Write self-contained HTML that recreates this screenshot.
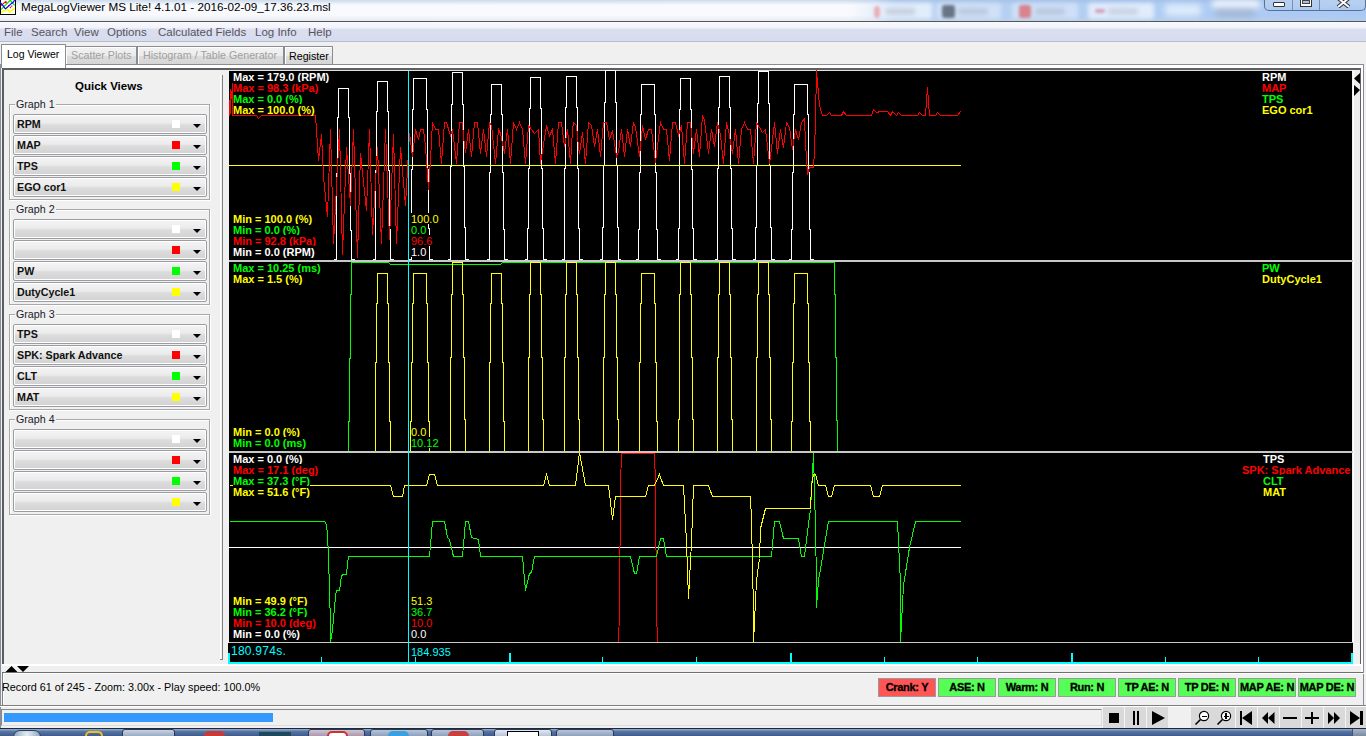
<!DOCTYPE html><html><head><meta charset="utf-8"><style>
*{margin:0;padding:0;box-sizing:border-box}
html,body{width:1366px;height:736px;overflow:hidden;background:#f0f0f0;font-family:"Liberation Sans",sans-serif;position:relative}
div{white-space:nowrap}
.pt{background:linear-gradient(#000 0,#000 11px,transparent 11px)}
.a{position:absolute}
.menu{font-size:12px;color:#3c3c46;top:24px}
.tab{position:absolute;font-size:10.7px;border:1px solid #898c95;background:linear-gradient(#f3f3f3 0%,#ebebeb 50%,#dddddd 55%,#d5d5d5 100%);box-shadow:inset 1px 1px 0 #fff;color:#a0a0a0;padding-left:5px;line-height:16px}
.combo{position:absolute;left:13px;width:194px;height:20px;border:1px solid #9a9ca2;border-radius:2px;background:linear-gradient(#f4f4f4 0%,#ebebeb 45%,#dcdcdc 55%,#d2d2d2 100%);font-weight:bold;font-size:10.7px;color:#111;padding-left:3px;line-height:18px;box-shadow:inset 0 0 0 1px #fff}
.sq{position:absolute;left:158px;top:5px;width:8px;height:8px}
.arr{position:absolute;left:179px;top:9px;width:0;height:0;border-left:4px solid transparent;border-right:4px solid transparent;border-top:4px solid #000}
.grp{position:absolute;left:9px;width:201px;border:1px solid #a8a8a8;box-shadow:1px 1px 0 #fff inset,1px 1px 0 #fff}
.glab{position:absolute;left:5px;top:-8px;background:#f0f0f0;font-size:10.7px;color:#1a1a2a;padding:0 1px;line-height:14px}
.ind{position:absolute;top:678px;height:19px;width:58px;border:1px solid #9a9a9a;font-weight:bold;font-size:11px;letter-spacing:-0.3px;-webkit-text-stroke:0.3px #000;text-align:center;line-height:17px;color:#000}
.tb{position:absolute;top:707px;height:20px;width:21px;background:#dadada}
</style></head><body>
<div class="a" style="left:0;top:0;width:1366px;height:21px;background:linear-gradient(90deg,#f7f9fc 0%,#f9fafd 62%,#eef4fb 63.5%,#bcd5f3 65.5%,#b4cff2 75%,#b0cdf3 85%,#aecbf3 90%,#a9c9f4 100%)"></div>
<div class="a" style="left:0;top:0;width:1366px;height:5px;background:linear-gradient(rgba(150,180,220,0.45),rgba(150,180,220,0))"></div>
<div class="a" style="left:0;top:15px;width:1366px;height:6px;background:linear-gradient(rgba(200,210,225,0),rgba(200,210,225,0.35))"></div>
<div class="a" style="left:870px;top:3px;width:62px;height:16px;border-radius:3px;background:rgba(235,242,252,0.8);filter:blur(2px)"></div>
<div class="a" style="left:937px;top:3px;width:64px;height:16px;border-radius:3px;background:rgba(225,235,250,0.6);filter:blur(2px)"></div>
<div class="a" style="left:1012px;top:3px;width:66px;height:16px;border-radius:3px;background:rgba(225,235,250,0.6);filter:blur(2px)"></div>
<div class="a" style="left:1088px;top:3px;width:66px;height:16px;border-radius:3px;background:rgba(240,245,255,0.75);filter:blur(2px)"></div>
<div class="a" style="left:1165px;top:4px;width:36px;height:12px;border-radius:3px;background:rgba(240,248,255,0.7);filter:blur(3px)"></div>
<div class="a" style="left:1212px;top:0px;width:48px;height:8px;border-radius:3px;background:rgba(255,255,255,0.85);filter:blur(3px)"></div>
<div class="a" style="left:1215px;top:9px;width:40px;height:8px;border-radius:3px;background:rgba(150,160,175,0.45);filter:blur(3px)"></div>
<div class="a" style="left:874px;top:6px;width:6px;height:12px;border-radius:3px;background:rgba(230,120,130,0.55);filter:blur(1.5px)"></div>
<div class="a" style="left:942px;top:5px;width:13px;height:13px;border-radius:3px;background:rgba(70,80,95,0.75);filter:blur(1.5px)"></div>
<div class="a" style="left:1019px;top:5px;width:12px;height:13px;border-radius:3px;background:rgba(220,70,70,0.6);filter:blur(1.5px)"></div>
<div class="a" style="left:1095px;top:9px;width:10px;height:4px;border-radius:3px;background:rgba(200,80,120,0.5);filter:blur(1.5px)"></div>
<div class="a" style="left:885px;top:8px;width:30px;height:7px;border-radius:3px;background:rgba(150,160,180,0.35);filter:blur(2px)"></div>
<div class="a" style="left:958px;top:8px;width:30px;height:7px;border-radius:3px;background:rgba(150,160,180,0.35);filter:blur(2px)"></div>
<div class="a" style="left:1035px;top:8px;width:30px;height:7px;border-radius:3px;background:rgba(150,160,180,0.35);filter:blur(2px)"></div>
<div class="a" style="left:1108px;top:8px;width:30px;height:7px;border-radius:3px;background:rgba(150,160,180,0.3);filter:blur(2px)"></div>
<div class="a" style="left:0;top:21px;width:1366px;height:1px;background:#555"></div>
<svg class="a" style="left:0;top:0" width="17" height="16"><rect x="0" y="0" width="16" height="15" fill="#000"/><rect x="1" y="0" width="14" height="14" fill="#fff"/><g fill="none" stroke-width="1.2" stroke-linejoin="round"><polyline points="0.9,5.6 2.4,4.4 5.9,1.4 6.4,3.4" stroke="#f00"/><polyline points="8.4,5.4 10.5,7.6 12.5,5.4" stroke="#f00" stroke-dasharray="1.2 1"/><polyline points="1.2,9.3 3.9,6.6 10.3,0.3 14.7,5.4" stroke="#0d0"/><polyline points="0,2.4 1.5,3.9 3.4,6.1 5.4,9 11.5,3.4 13.4,2 14.7,0" stroke="#00f"/><polyline points="1.5,12.5 3.9,11 8,9.5 9.8,12.2 14.7,8.3" stroke="#ff0" stroke-width="1.5"/></g></svg>
<div class="a" style="left:21px;top:0px;font-size:11.7px;line-height:14px;color:#000">MegaLogViewer MS Lite! 4.1.01 - 2016-02-09_17.36.23.msl</div>
<div class="a" style="left:1264px;top:-3px;width:102px;height:14px;border:1px solid #5d7090;border-top:none;border-radius:0 0 5px 5px;background:linear-gradient(rgba(210,225,245,0.6),rgba(170,200,240,0.6))"></div>
<div class="a" style="left:1292px;top:-3px;width:1px;height:13px;background:#7d8fa8"></div>
<div class="a" style="left:1319px;top:-3px;width:1px;height:13px;background:#7d8fa8"></div>
<div class="a" style="left:1273px;top:2px;width:12px;height:5px;border:1px solid #333;background:#fff;border-radius:1px"></div>
<div class="a" style="left:1300px;top:-2px;width:12px;height:9px;border:1px solid #333;background:#fff"></div>
<div class="a" style="left:1302px;top:0px;width:8px;height:4px;border:1px solid #444;background:#a8c0e0"></div>
<svg class="a" style="left:1336px;top:-2px" width="16" height="10"><path d="M2,0 L13,9 M13,0 L2,9" stroke="#333" stroke-width="4"/><path d="M2,0 L13,9 M13,0 L2,9" stroke="#fff" stroke-width="2"/></svg>
<div class="a" style="left:0;top:22px;width:1366px;height:19px;background:linear-gradient(#f9fafd 0%,#f1f3fa 30%,#dadff0 40%,#d7dcee 100%)"></div>
<div class="a" style="left:0;top:41px;width:1366px;height:1px;background:#b6bccc"></div>
<div class="a menu" style="left:4px;top:25px;font-size:11.5px;line-height:14px;color:#58535e">File</div>
<div class="a menu" style="left:31px;top:25px;font-size:11.5px;line-height:14px;color:#58535e">Search</div>
<div class="a menu" style="left:74px;top:25px;font-size:11.5px;line-height:14px;color:#58535e">View</div>
<div class="a menu" style="left:107px;top:25px;font-size:11.5px;line-height:14px;color:#58535e">Options</div>
<div class="a menu" style="left:158px;top:25px;font-size:11.5px;line-height:14px;color:#58535e">Calculated Fields</div>
<div class="a menu" style="left:255px;top:25px;font-size:11.5px;line-height:14px;color:#58535e">Log Info</div>
<div class="a menu" style="left:308px;top:25px;font-size:11.5px;line-height:14px;color:#58535e">Help</div>
<div class="a" style="left:0;top:42px;width:1366px;height:22px;background:#f0f0f0"></div>
<div class="a" style="left:0;top:64px;width:1364px;height:1px;background:#898c95"></div>
<div class="a" style="left:0;top:65px;width:1363px;height:3px;background:#fff"></div>
<div class="a" style="left:2px;top:68px;width:1360px;height:2px;background:#5f5f5f"></div>
<div class="a" style="left:1363px;top:64px;width:1px;height:664px;background:#898c95"></div>
<div class="a" style="left:1361px;top:65px;width:2px;height:607px;background:#fff"></div>
<div class="a" style="left:1360px;top:68px;width:1px;height:596px;background:#606060"></div>
<div class="a" style="left:0;top:64px;width:1px;height:672px;background:#8890a0"></div>
<div class="tab" style="left:65px;top:46px;width:72px;height:19px">Scatter Plots</div>
<div class="tab" style="left:137px;top:46px;width:147px;height:19px">Histogram / Table Generator</div>
<div class="tab" style="left:284px;top:46px;width:49px;height:19px;color:#000;line-height:18px;padding-left:4px">Register</div>
<div class="a" style="left:1px;top:44px;width:65px;height:24px;border:1px solid #898c95;border-bottom:none;background:#fff;font-size:10.5px;padding-left:5px;line-height:18px;color:#000">Log Viewer</div>
<div class="a" style="left:2px;top:68px;width:2px;height:596px;background:#5d5d5d"></div>
<div class="a" style="left:220px;top:75px;width:1px;height:585px;background:#fff"></div>
<div class="a" style="left:222px;top:75px;width:1px;height:585px;background:#808080"></div>
<div class="a" style="left:220px;top:659px;width:3px;height:1px;background:#808080"></div>
<div class="a" style="left:75px;top:79px;font-size:11.5px;font-weight:bold;line-height:14px">Quick Views</div>
<div class="grp" style="top:104px;height:96px"><div class="glab">Graph 1</div></div>
<div class="combo" style="top:114px">RPM<div class="sq" style="background:#fff"></div><div class="arr"></div></div>
<div class="combo" style="top:135px">MAP<div class="sq" style="background:#f00"></div><div class="arr"></div></div>
<div class="combo" style="top:156px">TPS<div class="sq" style="background:#0f0"></div><div class="arr"></div></div>
<div class="combo" style="top:177px">EGO cor1<div class="sq" style="background:#ff0"></div><div class="arr"></div></div>
<div class="grp" style="top:209px;height:96px"><div class="glab">Graph 2</div></div>
<div class="combo" style="top:219px"><div class="sq" style="background:#fff"></div><div class="arr"></div></div>
<div class="combo" style="top:240px"><div class="sq" style="background:#f00"></div><div class="arr"></div></div>
<div class="combo" style="top:261px">PW<div class="sq" style="background:#0f0"></div><div class="arr"></div></div>
<div class="combo" style="top:282px">DutyCycle1<div class="sq" style="background:#ff0"></div><div class="arr"></div></div>
<div class="grp" style="top:314px;height:96px"><div class="glab">Graph 3</div></div>
<div class="combo" style="top:324px">TPS<div class="sq" style="background:#fff"></div><div class="arr"></div></div>
<div class="combo" style="top:345px">SPK: Spark Advance<div class="sq" style="background:#f00"></div><div class="arr"></div></div>
<div class="combo" style="top:366px">CLT<div class="sq" style="background:#0f0"></div><div class="arr"></div></div>
<div class="combo" style="top:387px">MAT<div class="sq" style="background:#ff0"></div><div class="arr"></div></div>
<div class="grp" style="top:419px;height:96px"><div class="glab">Graph 4</div></div>
<div class="combo" style="top:429px"><div class="sq" style="background:#fff"></div><div class="arr"></div></div>
<div class="combo" style="top:450px"><div class="sq" style="background:#f00"></div><div class="arr"></div></div>
<div class="combo" style="top:471px"><div class="sq" style="background:#0f0"></div><div class="arr"></div></div>
<div class="combo" style="top:492px"><div class="sq" style="background:#ff0"></div><div class="arr"></div></div>
<div class="a" style="left:2px;top:664px;width:1359px;height:2px;background:#fff"></div>
<svg class="a" style="left:0;top:666px" width="32" height="7"><path d="M5.5,6 L11.5,0 L17.5,6 Z M17,0 L29,0 L23,6 Z" fill="#000"/></svg>
<div class="a" style="left:2px;top:672px;width:1361px;height:1px;background:#707070"></div>
<div class="a" style="left:2px;top:673px;width:1px;height:32px;background:#808080"></div>
<div class="a" style="left:3px;top:673px;width:1363px;height:1px;background:#fff"></div>
<div class="a" style="left:3px;top:673px;width:1px;height:31px;background:#fff"></div>
<div class="a" style="left:0;top:705px;width:1366px;height:1px;background:#808080"></div>
<div class="a" style="left:0;top:706px;width:1366px;height:1px;background:#fff"></div>
<div class="a" style="left:2px;top:680px;font-size:10.8px;line-height:14px;color:#000">Record 61 of 245 - Zoom: 3.00x - Play speed: 100.0%</div>
<div class="ind" style="left:878px;background:#ff5555">Crank: Y</div>
<div class="ind" style="left:938px;background:#55ff55">ASE: N</div>
<div class="ind" style="left:998px;background:#55ff55">Warm: N</div>
<div class="ind" style="left:1058px;background:#55ff55">Run: N</div>
<div class="ind" style="left:1118px;background:#55ff55">TP AE: N</div>
<div class="ind" style="left:1178px;background:#55ff55">TP DE: N</div>
<div class="ind" style="left:1238px;background:#55ff55">MAP AE: N</div>
<div class="ind" style="left:1298px;background:#55ff55">MAP DE: N</div>
<div class="a" style="left:1px;top:709px;width:1101px;height:17px;border:1px solid #888;border-right-color:#ddd;border-bottom-color:#ddd;background:#f0f0f0"></div>
<div class="a" style="left:4px;top:713px;width:269px;height:9px;background:#3399ff"></div>
<div class="a" style="left:1103px;top:707px;width:65px;height:21px;background:#d9d9d9"></div>
<div class="a" style="left:1191px;top:707px;width:175px;height:21px;background:#d9d9d9"></div>
<svg class="a" style="left:1100px;top:704px" width="266" height="24" shape-rendering="crispEdges"><rect x="24" y="3" width="1" height="21" fill="#f4f4f4"/><rect x="46" y="3" width="1" height="21" fill="#f4f4f4"/><rect x="134.5" y="3" width="1" height="21" fill="#f4f4f4"/><rect x="156.5" y="3" width="1" height="21" fill="#f4f4f4"/><rect x="178.5" y="3" width="1" height="21" fill="#f4f4f4"/><rect x="200.5" y="3" width="1" height="21" fill="#f4f4f4"/><rect x="222.5" y="3" width="1" height="21" fill="#f4f4f4"/><rect x="244.5" y="3" width="1" height="21" fill="#f4f4f4"/><rect x="9" y="9" width="10" height="10" fill="#000"/><rect x="33" y="7" width="2" height="14" fill="#000"/><rect x="37" y="7" width="2" height="14" fill="#000"/><path d="M52,7 L65,14 L52,21 Z" fill="#000" shape-rendering="auto"/><circle cx="104" cy="12" r="4.6" fill="#fff" stroke="#000" stroke-width="1.2" shape-rendering="auto"/><path d="M100.5,15.5 L95.5,20.5" stroke="#000" stroke-width="1.6" shape-rendering="auto"/><rect x="101.5" y="11.5" width="5" height="1.4" fill="#000"/><circle cx="126" cy="12" r="4.6" fill="#fff" stroke="#000" stroke-width="1.2" shape-rendering="auto"/><path d="M122.5,15.5 L117.5,20.5" stroke="#000" stroke-width="1.6" shape-rendering="auto"/><rect x="123.5" y="11.5" width="5" height="1.4" fill="#000"/><rect x="125.3" y="9" width="1.4" height="6" fill="#000"/><rect x="140" y="7" width="2" height="14" fill="#000"/><path d="M142,14 L152,7 L152,21 Z" fill="#000" shape-rendering="auto"/><path d="M162,14 L168,8 L168,20 Z M168,14 L174.5,8 L174.5,20 Z" fill="#000" shape-rendering="auto"/><rect x="183" y="13" width="14" height="2" fill="#000"/><rect x="205" y="13" width="14" height="2" fill="#000"/><rect x="211" y="8" width="2" height="12" fill="#000"/><path d="M228,8 L234,14 L228,20 Z M234,8 L240,14 L234,20 Z" fill="#000" shape-rendering="auto"/><path d="M250,7 L260,14 L250,21 Z" fill="#000" shape-rendering="auto"/><rect x="260" y="7" width="2.5" height="14" fill="#000"/></svg>
<svg class="a" style="left:0;top:0" width="1366" height="736" shape-rendering="crispEdges">
<rect x="229" y="70" width="1123" height="1" fill="#e0e0e0"/><rect x="229" y="71" width="1123" height="593" fill="#000"/><rect x="1352" y="643" width="1" height="21" fill="#000"/><rect x="228" y="643" width="1" height="21" fill="#000"/>
<rect x="228" y="662" width="1125" height="2" fill="#00ffff"/>
<polyline points="326.5,260.5 333.5,260.5 334.5,259.5 336.5,259.5 336.5,230.5 336.5,230.5 336.5,173.5 337.5,173.5 337.5,117.5 338.5,117.5 338.5,88.5 339.5,88.5 348.5,88.5 348.5,117.5 349.5,117.5 349.5,173.5 350.5,173.5 350.5,230.5 351.5,230.5 351.5,259.5 352.5,259.5 354.5,259.5 355.5,260.5 372.5,260.5 373.5,259.5 375.5,259.5 375.5,229.5 375.5,229.5 375.5,170.5 376.5,170.5 376.5,111.5 377.5,111.5 377.5,81.5 378.5,81.5 387.5,81.5 387.5,111.5 388.5,111.5 388.5,170.5 389.5,170.5 389.5,229.5 390.5,229.5 390.5,259.5 391.5,259.5 393.5,259.5 394.5,260.5 408.5,260.5 409.5,259.5 411.5,259.5 411.5,228.5 411.5,228.5 411.5,169.5 412.5,169.5 412.5,109.5 413.5,109.5 413.5,78.5 414.5,78.5 426.5,78.5 426.5,109.5 427.5,109.5 427.5,169.5 428.5,169.5 428.5,228.5 429.5,228.5 429.5,259.5 430.5,259.5 432.5,259.5 433.5,260.5 447.5,260.5 448.5,259.5 450.5,259.5 450.5,227.5 450.5,227.5 450.5,166.5 451.5,166.5 451.5,104.5 452.5,104.5 452.5,72.5 453.5,72.5 462.5,72.5 462.5,104.5 463.5,104.5 463.5,166.5 464.5,166.5 464.5,227.5 465.5,227.5 465.5,259.5 466.5,259.5 468.5,259.5 469.5,260.5 486.5,260.5 487.5,259.5 489.5,259.5 489.5,229.5 489.5,229.5 489.5,172.5 490.5,172.5 490.5,114.5 491.5,114.5 491.5,84.5 492.5,84.5 501.5,84.5 501.5,114.5 502.5,114.5 502.5,172.5 503.5,172.5 503.5,229.5 504.5,229.5 504.5,259.5 505.5,259.5 507.5,259.5 508.5,260.5 524.5,260.5 525.5,259.5 527.5,259.5 527.5,228.5 528.5,228.5 528.5,168.5 529.5,168.5 529.5,108.5 530.5,108.5 530.5,77.5 531.5,77.5 540.5,77.5 540.5,108.5 541.5,108.5 541.5,168.5 542.5,168.5 542.5,228.5 543.5,228.5 543.5,259.5 544.5,259.5 546.5,259.5 547.5,260.5 561.5,260.5 562.5,259.5 564.5,259.5 564.5,228.5 564.5,228.5 564.5,168.5 565.5,168.5 565.5,107.5 566.5,107.5 566.5,76.5 567.5,76.5 576.5,76.5 576.5,107.5 577.5,107.5 577.5,168.5 578.5,168.5 578.5,228.5 579.5,228.5 579.5,259.5 580.5,259.5 582.5,259.5 583.5,260.5 599.5,260.5 600.5,259.5 602.5,259.5 602.5,227.5 603.5,227.5 603.5,165.5 604.5,165.5 604.5,102.5 605.5,102.5 605.5,70.5 606.5,70.5 615.5,70.5 615.5,102.5 616.5,102.5 616.5,165.5 617.5,165.5 617.5,227.5 618.5,227.5 618.5,259.5 618.5,259.5 620.5,259.5 621.5,260.5 635.5,260.5 636.5,259.5 638.5,259.5 638.5,229.5 639.5,229.5 639.5,172.5 640.5,172.5 640.5,114.5 641.5,114.5 641.5,84.5 642.5,84.5 654.5,84.5 654.5,114.5 655.5,114.5 655.5,172.5 656.5,172.5 656.5,229.5 657.5,229.5 657.5,259.5 658.5,259.5 660.5,259.5 661.5,260.5 675.5,260.5 676.5,259.5 678.5,259.5 678.5,228.5 679.5,228.5 679.5,169.5 679.5,169.5 679.5,109.5 680.5,109.5 680.5,78.5 681.5,78.5 690.5,78.5 690.5,109.5 691.5,109.5 691.5,169.5 692.5,169.5 692.5,228.5 693.5,228.5 693.5,259.5 694.5,259.5 696.5,259.5 697.5,260.5 714.5,260.5 715.5,259.5 717.5,259.5 717.5,228.5 717.5,228.5 717.5,168.5 718.5,168.5 718.5,107.5 719.5,107.5 719.5,76.5 720.5,76.5 729.5,76.5 729.5,107.5 730.5,107.5 730.5,168.5 731.5,168.5 731.5,228.5 732.5,228.5 732.5,259.5 733.5,259.5 735.5,259.5 736.5,260.5 752.5,260.5 753.5,259.5 755.5,259.5 755.5,227.5 756.5,227.5 756.5,165.5 757.5,165.5 757.5,103.5 758.5,103.5 758.5,71.5 759.5,71.5 768.5,71.5 768.5,103.5 769.5,103.5 769.5,165.5 770.5,165.5 770.5,227.5 771.5,227.5 771.5,259.5 772.5,259.5 774.5,259.5 775.5,260.5 788.5,260.5 789.5,259.5 791.5,259.5 791.5,229.5 792.5,229.5 792.5,172.5 793.5,172.5 793.5,114.5 794.5,114.5 794.5,84.5 795.5,84.5 807.5,84.5 807.5,114.5 808.5,114.5 808.5,172.5 809.5,172.5 809.5,229.5 810.5,229.5 810.5,259.5 811.5,259.5 813.5,259.5 814.5,260.5 812.5,260.5" fill="none" stroke="#fff" stroke-width="1"/>
<rect x="229" y="165" width="732" height="1" fill="#ffff00"/>
<polyline points="229.5,115.5 229.5,100.5 230.5,113.5 230.5,89.5 231.5,98.5 232.5,83.5 232.5,115.5 256.5,115.5 258.5,118.5 261.5,115.5 315.5,115.5 318.5,160.5 321.5,134.5 323.5,176.5 327.5,216.5 330.5,129.5 333.5,243.5 339.5,129.5 342.5,254.5 346.5,147.5 350.5,205.5 353.5,129.5 357.5,257.5 360.5,153.5 366.5,210.5 369.5,129.5 372.5,234.5 377.5,147.5 381.5,243.5 385.5,129.5 389.5,239.5 393.5,134.5 396.5,243.5 400.5,147.5 405.5,205.5 409.5,133.5 412.5,156.5 415.5,129.5 418.5,139.5 420.5,129.5 423.5,129.5 425.5,146.5 428.5,189.5 430.5,159.5 432.5,122.5 435.5,129.5 438.5,129.5 441.5,163.5 444.5,122.5 446.5,122.5 450.5,135.5 452.5,129.5 456.5,163.5 459.5,122.5 462.5,122.5 463.5,137.5 465.5,152.5 468.5,129.5 471.5,156.5 474.5,122.5 477.5,122.5 480.5,153.5 483.5,129.5 486.5,156.5 489.5,122.5 491.5,125.5 495.5,163.5 498.5,129.5 500.5,133.5 504.5,153.5 507.5,129.5 510.5,163.5 513.5,122.5 516.5,129.5 519.5,122.5 522.5,129.5 525.5,163.5 528.5,125.5 534.5,133.5 538.5,129.5 540.5,163.5 546.5,125.5 549.5,135.5 552.5,129.5 555.5,163.5 558.5,122.5 561.5,122.5 564.5,146.5 567.5,129.5 570.5,163.5 572.5,129.5 573.5,122.5 576.5,125.5 578.5,147.5 579.5,153.5 582.5,132.5 585.5,163.5 588.5,122.5 591.5,125.5 594.5,146.5 597.5,129.5 600.5,156.5 603.5,122.5 606.5,122.5 609.5,139.5 612.5,130.5 616.5,156.5 618.5,151.5 621.5,129.5 624.5,156.5 627.5,129.5 630.5,146.5 633.5,122.5 635.5,127.5 639.5,156.5 642.5,125.5 645.5,139.5 648.5,129.5 651.5,129.5 655.5,162.5 660.5,122.5 663.5,129.5 666.5,129.5 669.5,160.5 672.5,122.5 675.5,122.5 678.5,135.5 681.5,125.5 684.5,163.5 687.5,122.5 690.5,122.5 693.5,153.5 696.5,129.5 699.5,156.5 702.5,115.5 704.5,120.5 708.5,153.5 711.5,129.5 714.5,146.5 717.5,122.5 720.5,135.5 723.5,163.5 726.5,122.5 729.5,135.5 732.5,153.5 735.5,129.5 738.5,163.5 741.5,129.5 744.5,122.5 747.5,129.5 750.5,129.5 753.5,163.5 756.5,122.5 759.5,127.5 762.5,132.5 765.5,129.5 769.5,163.5 771.5,148.5 774.5,122.5 777.5,153.5 780.5,129.5 783.5,147.5 786.5,122.5 789.5,127.5 792.5,149.5 795.5,129.5 798.5,139.5 801.5,122.5 804.5,118.5 805.5,142.5 807.5,174.5 809.5,167.5 813.5,167.5 814.5,151.5 815.5,119.5 816.5,70.5 819.5,105.5 822.5,115.5 826.5,115.5 829.5,112.5 831.5,115.5 841.5,115.5 843.5,111.5 846.5,115.5 871.5,115.5 873.5,109.5 876.5,112.5 880.5,111.5 887.5,111.5 890.5,115.5 892.5,111.5 896.5,115.5 898.5,112.5 901.5,115.5 917.5,115.5 919.5,112.5 922.5,115.5 925.5,115.5 927.5,87.5 929.5,115.5 935.5,115.5 937.5,112.5 940.5,115.5 957.5,115.5 960.5,111.5" fill="none" stroke="#ff0000" stroke-width="1"/>
<polyline points="229.5,451.5 348.5,451.5 348.5,421.5 349.5,421.5 349.5,358.5 350.5,358.5 350.5,294.5 351.5,294.5 351.5,262.5 388.5,262.5 390.5,264.5 500.5,264.5 502.5,262.5 834.5,262.5 834.5,294.5 835.5,294.5 835.5,357.5 836.5,357.5 836.5,420.5 837.5,420.5 837.5,451.5 960.5,451.5" fill="none" stroke="#00ff00" stroke-width="1"/>
<polyline points="229.5,451.5 375.5,451.5 375.5,421.5 375.5,421.5 375.5,362.5 376.5,362.5 376.5,303.5 377.5,303.5 377.5,273.5 378.5,273.5 387.5,273.5 387.5,303.5 388.5,303.5 388.5,362.5 389.5,362.5 389.5,421.5 390.5,421.5 390.5,451.5 390.5,451.5 410.5,451.5 410.5,421.5 411.5,421.5 411.5,362.5 412.5,362.5 412.5,303.5 413.5,303.5 413.5,273.5 414.5,273.5 426.5,273.5 426.5,303.5 427.5,303.5 427.5,362.5 428.5,362.5 428.5,421.5 429.5,421.5 429.5,451.5 429.5,451.5 450.5,451.5 450.5,419.5 450.5,419.5 450.5,357.5 451.5,357.5 451.5,294.5 452.5,294.5 452.5,262.5 453.5,262.5 462.5,262.5 462.5,294.5 463.5,294.5 463.5,357.5 464.5,357.5 464.5,419.5 465.5,419.5 465.5,451.5 465.5,451.5 489.5,451.5 489.5,421.5 489.5,421.5 489.5,362.5 490.5,362.5 490.5,303.5 491.5,303.5 491.5,273.5 492.5,273.5 501.5,273.5 501.5,303.5 502.5,303.5 502.5,362.5 503.5,362.5 503.5,421.5 504.5,421.5 504.5,451.5 505.5,451.5 528.5,451.5 528.5,419.5 528.5,419.5 528.5,357.5 529.5,357.5 529.5,294.5 530.5,294.5 530.5,262.5 531.5,262.5 540.5,262.5 540.5,294.5 541.5,294.5 541.5,357.5 542.5,357.5 542.5,419.5 543.5,419.5 543.5,451.5 543.5,451.5 564.5,451.5 564.5,419.5 564.5,419.5 564.5,357.5 565.5,357.5 565.5,294.5 566.5,294.5 566.5,262.5 567.5,262.5 576.5,262.5 576.5,294.5 577.5,294.5 577.5,357.5 578.5,357.5 578.5,419.5 579.5,419.5 579.5,451.5 579.5,451.5 603.5,451.5 603.5,419.5 603.5,419.5 603.5,357.5 604.5,357.5 604.5,294.5 605.5,294.5 605.5,262.5 606.5,262.5 615.5,262.5 615.5,294.5 616.5,294.5 616.5,357.5 617.5,357.5 617.5,419.5 618.5,419.5 618.5,451.5 618.5,451.5 639.5,451.5 639.5,421.5 639.5,421.5 639.5,362.5 640.5,362.5 640.5,303.5 641.5,303.5 641.5,273.5 642.5,273.5 654.5,273.5 654.5,303.5 655.5,303.5 655.5,362.5 656.5,362.5 656.5,421.5 657.5,421.5 657.5,451.5 657.5,451.5 678.5,451.5 678.5,419.5 679.5,419.5 679.5,357.5 679.5,357.5 679.5,294.5 680.5,294.5 680.5,262.5 681.5,262.5 690.5,262.5 690.5,294.5 691.5,294.5 691.5,357.5 692.5,357.5 692.5,419.5 693.5,419.5 693.5,451.5 694.5,451.5 717.5,451.5 717.5,419.5 717.5,419.5 717.5,357.5 718.5,357.5 718.5,294.5 719.5,294.5 719.5,262.5 720.5,262.5 729.5,262.5 729.5,294.5 730.5,294.5 730.5,357.5 731.5,357.5 731.5,419.5 732.5,419.5 732.5,451.5 732.5,451.5 756.5,451.5 756.5,419.5 756.5,419.5 756.5,357.5 757.5,357.5 757.5,294.5 758.5,294.5 758.5,262.5 759.5,262.5 768.5,262.5 768.5,294.5 769.5,294.5 769.5,357.5 770.5,357.5 770.5,419.5 771.5,419.5 771.5,451.5 771.5,451.5 791.5,451.5 791.5,421.5 792.5,421.5 792.5,362.5 793.5,362.5 793.5,303.5 794.5,303.5 794.5,273.5 795.5,273.5 807.5,273.5 807.5,303.5 808.5,303.5 808.5,362.5 809.5,362.5 809.5,421.5 810.5,421.5 810.5,451.5 810.5,451.5 960.5,451.5" fill="none" stroke="#ffff00" stroke-width="1"/>
<rect x="229" y="547" width="732" height="1" fill="#ffffff"/>
<polyline points="618.5,642.5 619.5,611.5 620.5,484.5 621.5,453.5 654.5,453.5 655.5,484.5 656.5,611.5 657.5,642.5" fill="none" stroke="#ff0000" stroke-width="1"/>
<polyline points="229.5,521.5 324.5,521.5 326.5,524.5 327.5,535.5 328.5,556.5 329.5,590.5 330.5,625.5 330.5,642.5 332.5,629.5 334.5,607.5 335.5,596.5 336.5,590.5 339.5,590.5 341.5,575.5 343.5,574.5 346.5,574.5 347.5,564.5 348.5,556.5 429.5,556.5 432.5,521.5 444.5,521.5 447.5,537.5 449.5,539.5 453.5,556.5 462.5,556.5 465.5,521.5 468.5,521.5 471.5,537.5 478.5,539.5 480.5,556.5 522.5,556.5 525.5,590.5 529.5,573.5 531.5,572.5 534.5,556.5 630.5,556.5 634.5,573.5 636.5,573.5 639.5,556.5 656.5,556.5 660.5,538.5 663.5,538.5 666.5,556.5 771.5,556.5 774.5,521.5 779.5,521.5 783.5,538.5 798.5,538.5 801.5,556.5 804.5,556.5 807.5,531.5 810.5,509.5 813.5,453.5 813.5,453.5 815.5,528.5 816.5,583.5 816.5,607.5 818.5,580.5 824.5,545.5 828.5,521.5 897.5,521.5 898.5,542.5 900.5,583.5 900.5,641.5 903.5,585.5 909.5,547.5 915.5,521.5 960.5,521.5" fill="none" stroke="#00ff00" stroke-width="1"/>
<polyline points="229.5,485.5 390.5,485.5 393.5,496.5 402.5,496.5 404.5,485.5 426.5,485.5 429.5,474.5 434.5,474.5 437.5,485.5 543.5,485.5 546.5,474.5 549.5,485.5 575.5,485.5 579.5,452.5 585.5,485.5 608.5,485.5 612.5,519.5 615.5,496.5 645.5,496.5 648.5,485.5 654.5,485.5 659.5,474.5 663.5,485.5 683.5,485.5 686.5,542.5 688.5,598.5 691.5,542.5 693.5,485.5 708.5,485.5 712.5,496.5 750.5,496.5 751.5,520.5 753.5,611.5 753.5,642.5 756.5,580.5 759.5,558.5 760.5,528.5 765.5,508.5 810.5,508.5 811.5,485.5 813.5,474.5 815.5,474.5 818.5,485.5 825.5,485.5 828.5,496.5 831.5,496.5 834.5,485.5 870.5,485.5 873.5,496.5 879.5,496.5 882.5,485.5 960.5,485.5" fill="none" stroke="#ffff00" stroke-width="1"/>
<rect x="229" y="260" width="1124" height="2" fill="#c8c8c8"/>
<rect x="229" y="451" width="1124" height="2" fill="#c8c8c8"/>
<rect x="229" y="642" width="1124" height="1" fill="#c8c8c8"/>
<rect x="408" y="71" width="1" height="592" fill="#00ffff"/>
<rect x="228" y="653" width="2" height="10" fill="#00ffff"/>
<rect x="509" y="653" width="2" height="10" fill="#00ffff"/>
<rect x="790" y="653" width="2" height="10" fill="#00ffff"/>
<rect x="1071" y="653" width="2" height="10" fill="#00ffff"/>
<rect x="1351" y="653" width="2" height="10" fill="#00ffff"/>
<rect x="321" y="657" width="1" height="6" fill="#00ffff"/>
<rect x="415" y="657" width="1" height="6" fill="#00ffff"/>
<rect x="602" y="657" width="1" height="6" fill="#00ffff"/>
<rect x="696" y="657" width="1" height="6" fill="#00ffff"/>
<rect x="884" y="657" width="1" height="6" fill="#00ffff"/>
<rect x="977" y="657" width="1" height="6" fill="#00ffff"/>
<rect x="1165" y="657" width="1" height="6" fill="#00ffff"/>
<rect x="1258" y="657" width="1" height="6" fill="#00ffff"/>
</svg>
<div class="a pt" style="left:233px;top:71px;font-size:11px;font-weight:bold;color:#ffffff;line-height:13px">Max = 179.0 (RPM)</div>
<div class="a pt" style="left:233px;top:82px;font-size:11px;font-weight:bold;color:#ff0000;line-height:13px">Max = 98.3 (kPa)</div>
<div class="a pt" style="left:233px;top:93px;font-size:11px;font-weight:bold;color:#00ff00;line-height:13px">Max = 0.0 (%)</div>
<div class="a pt" style="left:233px;top:104px;font-size:11px;font-weight:bold;color:#ffff00;line-height:13px">Max = 100.0 (%)</div>
<div class="a pt" style="left:233px;top:213px;font-size:11px;font-weight:bold;color:#ffff00;line-height:13px">Min = 100.0 (%)</div>
<div class="a pt" style="left:411px;top:213px;font-size:11px;font-weight:normal;color:#ffff00;line-height:13px">100.0</div>
<div class="a pt" style="left:233px;top:224px;font-size:11px;font-weight:bold;color:#00ff00;line-height:13px">Min = 0.0 (%)</div>
<div class="a pt" style="left:411px;top:224px;font-size:11px;font-weight:normal;color:#00ff00;line-height:13px">0.0</div>
<div class="a pt" style="left:233px;top:235px;font-size:11px;font-weight:bold;color:#ff0000;line-height:13px">Min = 92.8 (kPa)</div>
<div class="a pt" style="left:411px;top:235px;font-size:11px;font-weight:normal;color:#ff0000;line-height:13px">96.6</div>
<div class="a pt" style="left:233px;top:246px;font-size:11px;font-weight:bold;color:#ffffff;line-height:13px">Min = 0.0 (RPM)</div>
<div class="a pt" style="left:411px;top:246px;font-size:11px;font-weight:normal;color:#ffffff;line-height:13px">1.0</div>
<div class="a pt" style="left:1262px;top:71px;font-size:11px;font-weight:bold;color:#ffffff;line-height:13px">RPM</div>
<div class="a pt" style="left:1262px;top:82px;font-size:11px;font-weight:bold;color:#ff0000;line-height:13px">MAP</div>
<div class="a pt" style="left:1262px;top:93px;font-size:11px;font-weight:bold;color:#00ff00;line-height:13px">TPS</div>
<div class="a pt" style="left:1262px;top:104px;font-size:11px;font-weight:bold;color:#ffff00;line-height:13px">EGO cor1</div>
<div class="a pt" style="left:233px;top:262px;font-size:11px;font-weight:bold;color:#00ff00;line-height:13px">Max = 10.25 (ms)</div>
<div class="a pt" style="left:233px;top:273px;font-size:11px;font-weight:bold;color:#ffff00;line-height:13px">Max = 1.5 (%)</div>
<div class="a pt" style="left:233px;top:426px;font-size:11px;font-weight:bold;color:#ffff00;line-height:13px">Min = 0.0 (%)</div>
<div class="a pt" style="left:411px;top:426px;font-size:11px;font-weight:normal;color:#ffff00;line-height:13px">0.0</div>
<div class="a pt" style="left:233px;top:437px;font-size:11px;font-weight:bold;color:#00ff00;line-height:13px">Min = 0.0 (ms)</div>
<div class="a pt" style="left:411px;top:437px;font-size:11px;font-weight:normal;color:#00ff00;line-height:13px">10.12</div>
<div class="a pt" style="left:1262px;top:262px;font-size:11px;font-weight:bold;color:#00ff00;line-height:13px">PW</div>
<div class="a pt" style="left:1262px;top:273px;font-size:11px;font-weight:bold;color:#ffff00;line-height:13px">DutyCycle1</div>
<div class="a pt" style="left:233px;top:453px;font-size:11px;font-weight:bold;color:#ffffff;line-height:13px">Max = 0.0 (%)</div>
<div class="a pt" style="left:233px;top:464px;font-size:11px;font-weight:bold;color:#ff0000;line-height:13px">Max = 17.1 (deg)</div>
<div class="a pt" style="left:233px;top:475px;font-size:11px;font-weight:bold;color:#00ff00;line-height:13px">Max = 37.3 (&deg;F)</div>
<div class="a pt" style="left:233px;top:486px;font-size:11px;font-weight:bold;color:#ffff00;line-height:13px">Max = 51.6 (&deg;F)</div>
<div class="a pt" style="left:233px;top:595px;font-size:11px;font-weight:bold;color:#ffff00;line-height:13px">Min = 49.9 (&deg;F)</div>
<div class="a pt" style="left:411px;top:595px;font-size:11px;font-weight:normal;color:#ffff00;line-height:13px">51.3</div>
<div class="a pt" style="left:233px;top:606px;font-size:11px;font-weight:bold;color:#00ff00;line-height:13px">Min = 36.2 (&deg;F)</div>
<div class="a pt" style="left:411px;top:606px;font-size:11px;font-weight:normal;color:#00ff00;line-height:13px">36.7</div>
<div class="a pt" style="left:233px;top:617px;font-size:11px;font-weight:bold;color:#ff0000;line-height:13px">Min = 10.0 (deg)</div>
<div class="a pt" style="left:411px;top:617px;font-size:11px;font-weight:normal;color:#ff0000;line-height:13px">10.0</div>
<div class="a pt" style="left:233px;top:628px;font-size:11px;font-weight:bold;color:#ffffff;line-height:13px">Min = 0.0 (%)</div>
<div class="a pt" style="left:411px;top:628px;font-size:11px;font-weight:normal;color:#ffffff;line-height:13px">0.0</div>
<div class="a pt" style="left:1263px;top:453px;font-size:11px;font-weight:bold;color:#ffffff;line-height:13px">TPS</div>
<div class="a pt" style="left:1242px;top:464px;font-size:11px;font-weight:bold;color:#ff0000;line-height:13px">SPK: Spark Advance</div>
<div class="a pt" style="left:1263px;top:475px;font-size:11px;font-weight:bold;color:#00ff00;line-height:13px">CLT</div>
<div class="a pt" style="left:1263px;top:486px;font-size:11px;font-weight:bold;color:#ffff00;line-height:13px">MAT</div>
<div class="a" style="left:231px;top:645px;font-size:12px;letter-spacing:0.25px;color:#00ffff;line-height:13px">180.974s.</div>
<div class="a pt" style="left:411px;top:646px;font-size:11px;font-weight:normal;color:#00ffff;line-height:13px">184.935</div>
<div class="a" style="left:1353px;top:71px;width:7px;height:572px;background:#ececec;border-left:1px solid #fff"></div>
<svg class="a" style="left:1352px;top:71px" width="9" height="27"><path d="M2,7.5 L8,2 L8,13 Z M2,14 L8,19 L2,25 Z" fill="#000"/></svg>
<div class="a" style="left:0;top:728px;width:1366px;height:8px;background:linear-gradient(#1a2a40 0px,#1a2a40 1px,#8da3c4 1px,#8da3c4 2px,#5b77a6 3px,#3e5a8c 8px)"></div>
<div class="a" style="left:13px;top:730px;width:28px;height:14px;border-radius:14px;background:radial-gradient(circle at 50% 30%,#e8eef5,#7e9ab8);border:1px solid #2c4060"></div>
<div class="a" style="left:85px;top:731px;width:18px;height:10px;border-radius:9px;border:2px solid #f0c020;border-bottom:none"></div>
<div class="a" style="left:122px;top:729px;width:53px;height:8px;border:1px solid #2a3a55;border-radius:3px 3px 0 0;background:linear-gradient(#c8d2e2,#9aaac4)"></div>
<div class="a" style="left:308px;top:729px;width:57px;height:8px;border:1px solid #2a3a55;border-radius:3px 3px 0 0;background:linear-gradient(#d0c4d0,#a898b0)"></div>
<div class="a" style="left:370px;top:729px;width:58px;height:8px;border:1px solid #2a3a55;border-radius:3px 3px 0 0;background:linear-gradient(#b8c4d8,#8ea0bc)"></div>
<div class="a" style="left:431px;top:729px;width:53px;height:8px;border:1px solid #2a3a55;border-radius:3px 3px 0 0;background:linear-gradient(#b8c4d8,#8ea0bc)"></div>
<div class="a" style="left:494px;top:729px;width:58px;height:8px;border:1px solid #2a3a55;border-radius:3px 3px 0 0;background:linear-gradient(#e4e8f0,#b8c4d8)"></div>
<div class="a" style="left:556px;top:729px;width:58px;height:8px;border:1px solid #2a3a55;border-radius:3px 3px 0 0;background:linear-gradient(#b8c4d8,#8ea0bc)"></div>
<div class="a" style="left:204px;top:731px;width:21px;height:10px;border-radius:10px;background:#c83a3a"></div>
<div class="a" style="left:259px;top:732px;width:32px;height:6px;background:#1c4a5a"></div>
<div class="a" style="left:327px;top:731px;width:21px;height:10px;border-radius:10px;background:#fff;border:2px solid #d03030"></div>
<div class="a" style="left:388px;top:731px;width:21px;height:10px;border-radius:10px;background:#3aa0e0"></div>
<div class="a" style="left:448px;top:731px;width:21px;height:10px;border-radius:10px;background:#c84040"></div>
<div class="a" style="left:507px;top:731px;width:32px;height:6px;background:#fff;border:1px solid #000"></div>
<div class="a" style="left:1352px;top:729px;width:14px;height:7px;background:linear-gradient(#aab4c4,#7a8aa4);border-left:1px solid #44546e"></div>
</body></html>
